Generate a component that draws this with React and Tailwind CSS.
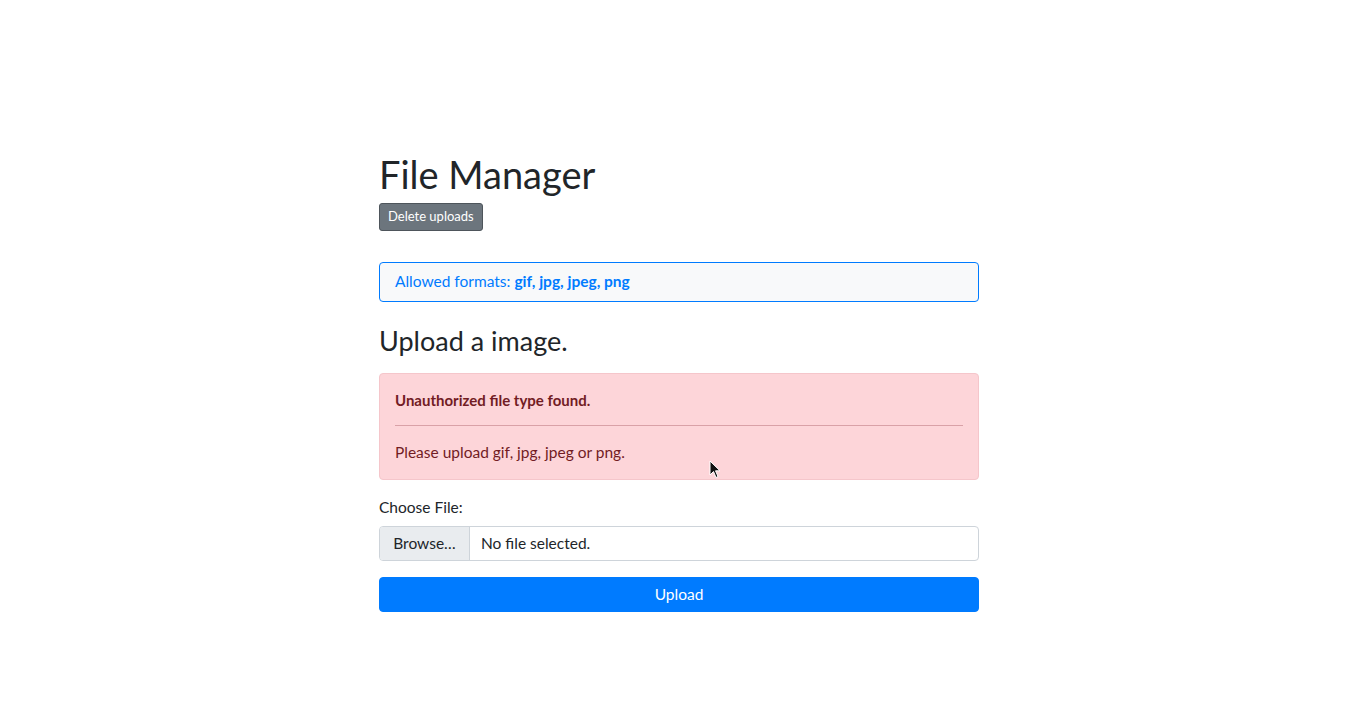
export default function App() {
  return (
    <div
      className="min-h-screen bg-white text-[#212529] relative"
      style={{ fontFamily: 'Lato, "Noto Sans", sans-serif' }}
    >
      <div className="w-[600px] mx-auto pt-[150px]">
        <h1 className="text-[38px] leading-[48px] font-normal mb-[5px]">File Manager</h1>
        <button className="h-[28px] px-[8px] text-[13px] text-white bg-[#6c757d] border border-[#4e555b] rounded-[3px]">
          Delete uploads
        </button>

        <div className="mt-[31px] h-[40px] flex items-center px-[15px] bg-[#f8f9fa] border border-[#007bff] rounded-[4px] text-[15.5px] text-[#007bff]">
          Allowed formats:&nbsp;<b className="font-bold">gif, jpg, jpeg, png</b>
        </div>

        <h3 className="mt-[22px] text-[27px] leading-[34px] font-normal">Upload a image.</h3>

        <div className="mt-[15px] px-[15px] pt-[14px] pb-[15px] bg-[#fdd5d9] border border-[#f5c6cb] rounded-[4px] text-[#721c24] text-[15.5px]">
          <p className="font-bold leading-[24px] text-[15px]">Unauthorized file type found.</p>
          <hr className="mt-[13px] mb-[14px] border-0 border-t border-[#d9a1a7]" />
          <p className="leading-[24px]">Please upload gif, jpg, jpeg or png.</p>
        </div>

        <label className="block mt-[15px] text-[15.5px] leading-[24px]">Choose File:</label>
        <div className="mt-[7px] h-[35px] flex border border-[#ced4da] rounded-[4px] overflow-hidden text-[15.5px]">
          <span className="w-[90px] flex items-center justify-center bg-[#e9ecef] border-r border-[#ced4da]">
            Browse…
          </span>
          <span className="flex items-center px-[11px]">No file selected.</span>
        </div>

        <button className="mt-[16px] w-full h-[35px] bg-[#007bff] text-white text-[15.5px] rounded-[4px] border border-[#007bff]">
          Upload
        </button>
      </div>

      <svg className="absolute left-[709px] top-[460px]" width="12" height="19" viewBox="0 0 12 19">
        <path d="M1 1 L1 15 L4.5 11.5 L7 17.5 L9 16.5 L6.5 10.8 L11 10.8 Z" fill="#111" stroke="#fff" strokeWidth="1" />
      </svg>
    </div>
  );
}
